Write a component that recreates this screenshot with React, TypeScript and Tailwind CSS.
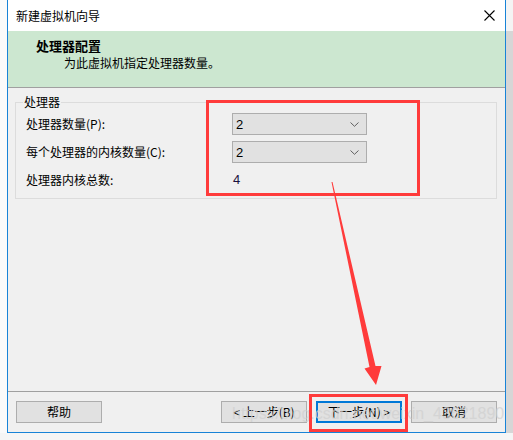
import React from "react";

const font = { fontFamily: '"Noto Sans CJK SC", "Microsoft YaHei", sans-serif' };

function Select({ value }: { value: string }) {
  return (
    <div className="w-[135px] h-[22px] bg-[#e1e1e1] border border-[#adadad] flex items-center justify-between pl-[3px] pr-[6px]">
      <span className="text-[13px] leading-none text-black" style={{ fontFamily: '"Liberation Sans", sans-serif' }}>{value}</span>
      <svg width="9" height="5" viewBox="0 0 9 5" className="mr-[1px]">
        <path d="M0.5 0.5 L4.5 4.3 L8.5 0.5" fill="none" stroke="#606060" strokeWidth="1" />
      </svg>
    </div>
  );
}

function Btn({ label, blue }: { label: string; blue?: boolean }) {
  return (
    <div
      className={`w-[86px] h-[22px] flex items-center justify-center text-[12px] text-black ${
        blue ? "bg-[#e1e1e1] border-2 border-[#0078d7]" : "bg-[#e1e1e1] border border-[#adadad]"
      }`}
    >
      {label}
    </div>
  );
}

export default function App() {
  return (
    <div className="relative w-[513px] h-[440px] bg-[#f5f5f5] overflow-hidden" style={font}>
      <div className="flex h-[433px]">
        <div className="w-[7px] bg-[#fafafa]" />
        <div className="w-[499px] h-[433px] flex flex-col border-x border-b border-[#1883d7] bg-[#f0f0f0]">
          {/* title bar */}
          <div className="h-[31px] bg-white flex items-center justify-between pl-[8px] pr-[10px]">
            <span className="text-[12px] text-black">新建虚拟机向导</span>
            <svg width="11" height="11" viewBox="0 0 11 11">
              <path d="M0.5 0.5 L10.5 10.5 M10.5 0.5 L0.5 10.5" stroke="#000" strokeWidth="1.1" />
            </svg>
          </div>
          {/* green header */}
          <div className="h-[57px] bg-[#cce7d0] border-b border-[#a0a0a0] pl-[28px] pt-[6px] flex flex-col">
            <span className="text-[13px] font-bold text-black leading-[17px]">处理器配置</span>
            <span className="text-[12px] text-black leading-[17px] pl-[28px]">为此虚拟机指定处理器数量。</span>
          </div>
          {/* body */}
          <div className="flex-1 pt-[14px] px-[7px]">
            <div className="relative border border-[#dcdcdc] h-[97px] w-[482px] pt-[10px] pl-[10px]">
              <span className="absolute -top-[9px] left-[7px] bg-[#f0f0f0] px-[1px] text-[12px] text-black leading-[16px]">处理器</span>
              <div className="flex items-center h-[22px]">
                <span className="w-[206px] text-[12px] text-black">处理器数量(P):</span>
                <Select value="2" />
              </div>
              <div className="flex items-center h-[22px] mt-[6px]">
                <span className="w-[206px] text-[12px] text-black">每个处理器的内核数量(C):</span>
                <Select value="2" />
              </div>
              <div className="flex items-center h-[22px] mt-[6px]">
                <span className="w-[207px] text-[12px] text-black">处理器内核总数:</span>
                <span className="text-[13px] text-[#1a1040]" style={{ fontFamily: '"Liberation Sans", sans-serif' }}>4</span>
              </div>
            </div>
          </div>
          {/* footer */}
          <div className="h-[41px] border-t border-[#a0a0a0] flex items-start pt-[9px] px-[8px]">
            <Btn label="帮助" />
            <div className="flex-1" />
            <Btn label="< 上一步(B)" />
            <div className="w-[9px]" />
            <Btn label="下一步(N) >" blue />
            <div className="w-[9px]" />
            <Btn label="取消" />
          </div>
        </div>
        <div className="w-[7px] flex flex-col">
          <div className="h-[31px] bg-[#f4f4f4]" />
          <div className="flex-1 bg-[#d6d6d6]" />
        </div>
      </div>

      {/* watermark */}
      <div
        className="absolute left-[232px] top-[406px] text-[16px] leading-none text-[#d0d0d0] pointer-events-none whitespace-nowrap"
        style={{ fontFamily: '"Liberation Sans", sans-serif', opacity: 0.75 }}
      >
        https://blog.csdn.net/weixin_43621890
      </div>

      {/* red annotations */}
      <div className="absolute left-[206px] top-[100px] w-[214px] h-[96px] border-[3px] border-[#ff3b3b] pointer-events-none" />
      <div className="absolute left-[309px] top-[394px] w-[99px] h-[38px] border-[3px] border-[#ff3b3b] pointer-events-none" />
      <svg className="absolute left-0 top-0 pointer-events-none" width="513" height="440" viewBox="0 0 513 440">
        <polygon
          points="331.5,182 332.5,182 375.5,366 381.5,366 376,385 364.5,368.5 369.5,367"
          fill="#ff3b3b"
        />
      </svg>
    </div>
  );
}
